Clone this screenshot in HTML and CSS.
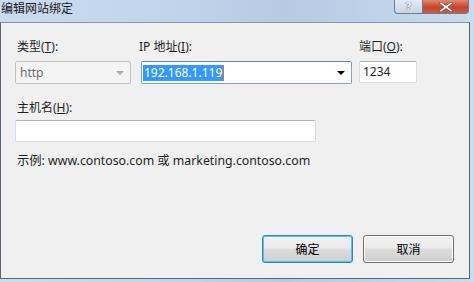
FILE: index.html
```html
<!DOCTYPE html>
<html lang="zh-CN">
<head>
    <meta charset="UTF-8">
    <title>编辑网站绑定</title>
    <link rel="stylesheet" href="styles.css">
</head>
<body>
<div class="win">
    <div class="win-titlebar">
        <span class="win-title">编辑网站绑定</span>
        <div class="win-caption">
            <span class="cap-btn cap-help">?</span>
            <span class="cap-btn cap-close">
                <svg width="14" height="10" viewBox="0 0 14 10"><path d="M2 0 L7 3.5 L12 0 L14 1 L9 5 L14 9 L12 10 L7 6.5 L2 10 L0 9 L5 5 L0 1 Z" fill="#fff" stroke="#7a2a1e" stroke-width="0.6"/></svg>
            </span>
        </div>
    </div>

    <div class="win-client">
        <div class="row-binding">
            <div class="field field-type">
                <label class="dlg-label">类型(<u>T</u>):</label>
                <div class="combo combo-disabled">
                    <span>http</span>
                    <span class="combo-arrow"></span>
                </div>
            </div>
            <div class="field field-ip">
                <label class="dlg-label">IP 地址(<u>I</u>):</label>
                <div class="combo combo-focus">
                    <span class="sel">192.168.1.119</span><span class="caret"></span>
                    <span class="combo-arrow dark"></span>
                </div>
            </div>
            <div class="field field-port">
                <label class="dlg-label">端口(<u>O</u>):</label>
                <div class="textbox">1234</div>
            </div>
        </div>

        <div class="field field-host">
            <label class="dlg-label">主机名(<u>H</u>):</label>
            <div class="textbox textbox-host"></div>
        </div>

        <p class="hint">示例: www.contoso.com 或 marketing.contoso.com</p>

        <div class="dlg-buttons">
            <button class="dlg-button default">确定</button>
            <button class="dlg-button">取消</button>
        </div>
    </div>
</div>
</body>
</html>
```

FILE: styles.css
```css
/* --- Windows 7 风格对话框 --- */
:root {
    --frame: #c4d7ec;
    --client-bg: #f0f0f0;
    --text: #1e1e1e;
    --ui-font: "Noto Sans", "Noto Sans CJK SC", sans-serif;
}

* {
    box-sizing: border-box;
}

body {
    margin: 0;
    width: 474px;
    height: 282px;
    overflow: hidden;
    background: linear-gradient(90deg, #c9dcf0 0%, #bfd3ea 40%, #b5cbe4 60%, #c8dbef 100%);
    font-family: var(--ui-font);
    font-size: 12px;
    color: var(--text);
}

.win {
    width: 470px;
}

.win-titlebar {
    height: 22px;
    display: flex;
    justify-content: space-between;
    align-items: flex-start;
}

.win-title {
    padding: 1px 0 0 1px;
    font-size: 12px;
    line-height: 16px;
    color: #1a1a1a;
}

.win-caption {
    display: flex;
    margin-right: 1px;
}

.cap-btn {
    height: 14px;
    display: flex;
    align-items: center;
    justify-content: center;
    border: 1px solid #6b7a8c;
    border-top: none;
}

.cap-help {
    width: 28px;
    border-radius: 0 0 0 4px;
    border-right: none;
    background: linear-gradient(#e4ebf3, #c9d5e3);
    color: #f4f7fa;
    font-family: "DejaVu Sans", sans-serif;
    font-size: 11px;
    font-weight: bold;
    text-shadow: 0 0 1px #4b5b6c, 0 0 1px #4b5b6c;
}

.cap-close {
    width: 47px;
    border-radius: 0 0 4px 0;
    background: linear-gradient(#dc8a74, #c4442b 55%, #cc5d42);
}

.win-client {
    height: 257px;
    display: flex;
    flex-direction: column;
    background: var(--client-bg);
    border: 1px solid #5b6672;
    border-top-color: #8796a6;
    padding: 16px 15px 15px 14px;
}

.row-binding {
    display: flex;
}

.field {
    display: flex;
    flex-direction: column;
}

.field-type {
    width: 116px;
}

.field-ip {
    width: 211px;
    margin-left: 10px;
}

.field-port {
    width: 58px;
    margin-left: 7px;
}

.dlg-label {
    height: 16px;
    line-height: 16px;
    margin-bottom: 6px;
    padding-left: 2px;
}

.field-ip .dlg-label {
    margin-left: -4px;
}

.field-port .dlg-label {
    padding-left: 0;
}

.dlg-label u {
    text-underline-offset: 1px;
}

.combo {
    height: 23px;
    display: flex;
    align-items: center;
    position: relative;
    padding-left: 1px;
    font-size: 12px;
    border-radius: 2px;
}

.combo-disabled {
    background: #f4f4f4;
    border: 1px solid #c2c2c2;
    color: #6d6d6d;
    padding-left: 4px;
}

.combo-focus {
    background: #fff;
    border: 1px solid #7da2ce;
    border-top-color: #5c87b8;
}

.sel {
    background: #3399ff;
    color: #fff;
    line-height: 16px;
    padding: 0 1px;
}

.caret {
    width: 1px;
    height: 16px;
    background: #e07a1f;
}

.combo-arrow {
    position: absolute;
    right: 6px;
    top: 9px;
    border-left: 4px solid transparent;
    border-right: 4px solid transparent;
    border-top: 4px solid #a8a8a8;
}

.combo-arrow.dark {
    border-top-color: #000;
}

.textbox {
    height: 22px;
    background: #fff;
    border: 1px solid #d6dce4;
    border-top-color: #abb3bd;
    border-radius: 2px;
    padding-left: 3px;
    font-size: 12px;
    line-height: 20px;
}

.field-host {
    margin-top: 16px;
}

.field-host .dlg-label {
    margin-bottom: 4px;
}

.textbox-host {
    width: 301px;
}

.hint {
    margin: 11px 0 0 2px;
    line-height: 16px;
    font-size: 12.3px;
}

.dlg-buttons {
    margin-top: auto;
    display: flex;
    justify-content: flex-end;
    gap: 10px;
}

.dlg-button {
    width: 91px;
    height: 28px;
    font-family: var(--ui-font);
    font-size: 12px;
    color: #000;
    border: 1px solid #707070;
    border-radius: 3px;
    background: linear-gradient(#f2f2f2 0%, #ebebeb 45%, #dddddd 50%, #cfcfcf 100%);
    box-shadow: inset 0 0 0 1px #fcfcfc;
    padding: 0;
}

.dlg-button.default {
    border-color: #3c7fb1;
    box-shadow: inset 0 0 0 1px #48c8f5;
}
```
